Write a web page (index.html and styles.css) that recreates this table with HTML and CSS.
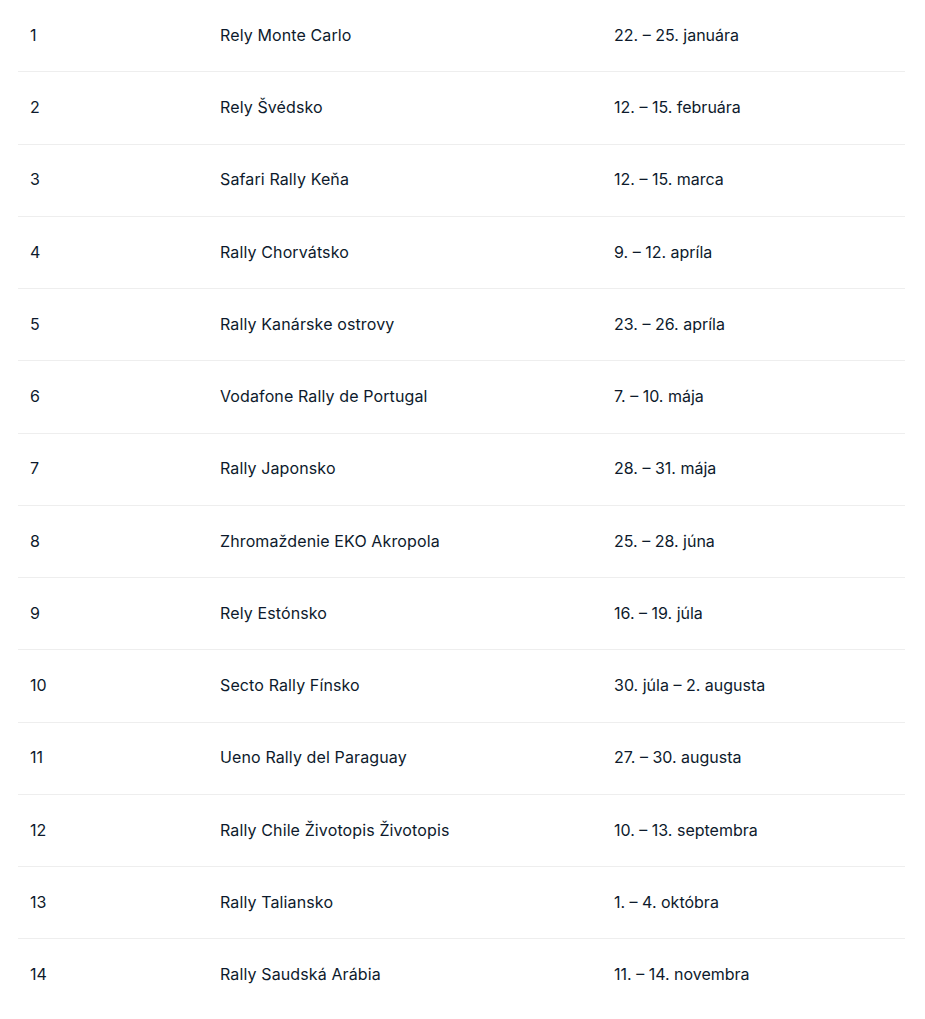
FILE: index.html
```html
<!DOCTYPE html>
<html lang="sk">
<head>
<meta charset="utf-8">
<link rel="stylesheet" href="styles.css">
</head>
<body>
<table class="schedule">
  <colgroup>
    <col class="c-num">
    <col class="c-name">
    <col class="c-date">
  </colgroup>
  <tbody>
    <tr><td>1</td><td>Rely Monte Carlo</td><td>22. – 25. januára</td></tr>
    <tr><td>2</td><td>Rely Švédsko</td><td>12. – 15. februára</td></tr>
    <tr><td>3</td><td>Safari Rally Keňa</td><td>12. – 15. marca</td></tr>
    <tr><td>4</td><td>Rally Chorvátsko</td><td>9. – 12. apríla</td></tr>
    <tr><td>5</td><td>Rally Kanárske ostrovy</td><td>23. – 26. apríla</td></tr>
    <tr><td>6</td><td>Vodafone Rally de Portugal</td><td>7. – 10. mája</td></tr>
    <tr><td>7</td><td>Rally Japonsko</td><td>28. – 31. mája</td></tr>
    <tr><td>8</td><td>Zhromaždenie EKO Akropola</td><td>25. – 28. júna</td></tr>
    <tr><td>9</td><td>Rely Estónsko</td><td>16. – 19. júla</td></tr>
    <tr><td>10</td><td>Secto Rally Fínsko</td><td>30. júla – 2. augusta</td></tr>
    <tr><td>11</td><td>Ueno Rally del Paraguay</td><td>27. – 30. augusta</td></tr>
    <tr><td>12</td><td>Rally Chile Životopis Životopis</td><td>10. – 13. septembra</td></tr>
    <tr><td>13</td><td>Rally Taliansko</td><td>1. – 4. októbra</td></tr>
    <tr><td>14</td><td>Rally Saudská Arábia</td><td>11. – 14. novembra</td></tr>
  </tbody>
</table>
</body>
</html>
```

FILE: styles.css
```css
html, body {
  margin: 0;
  padding: 0;
  background: #ffffff;
}

body {
  padding: 0 20px 0 18px;
  font-family: Inter, "Noto Sans", "Liberation Sans", sans-serif;
  font-size: 16px;
  color: #0d1a2c;
}

.schedule {
  width: 887px;
  border-collapse: collapse;
  table-layout: fixed;
}

.c-num { width: 190px; }
.c-name { width: 394px; }
.c-date { width: 303px; }

.schedule td {
  padding: 22.875px 12px 24.375px;
  line-height: 24px;
  vertical-align: middle;
  text-align: left;
  border-bottom: 1px solid #eeeeee;
  white-space: nowrap;
}

.schedule td:nth-child(2) {
  letter-spacing: 0.12px;
}

.schedule tr:last-child td {
  border-bottom: none;
}
```
